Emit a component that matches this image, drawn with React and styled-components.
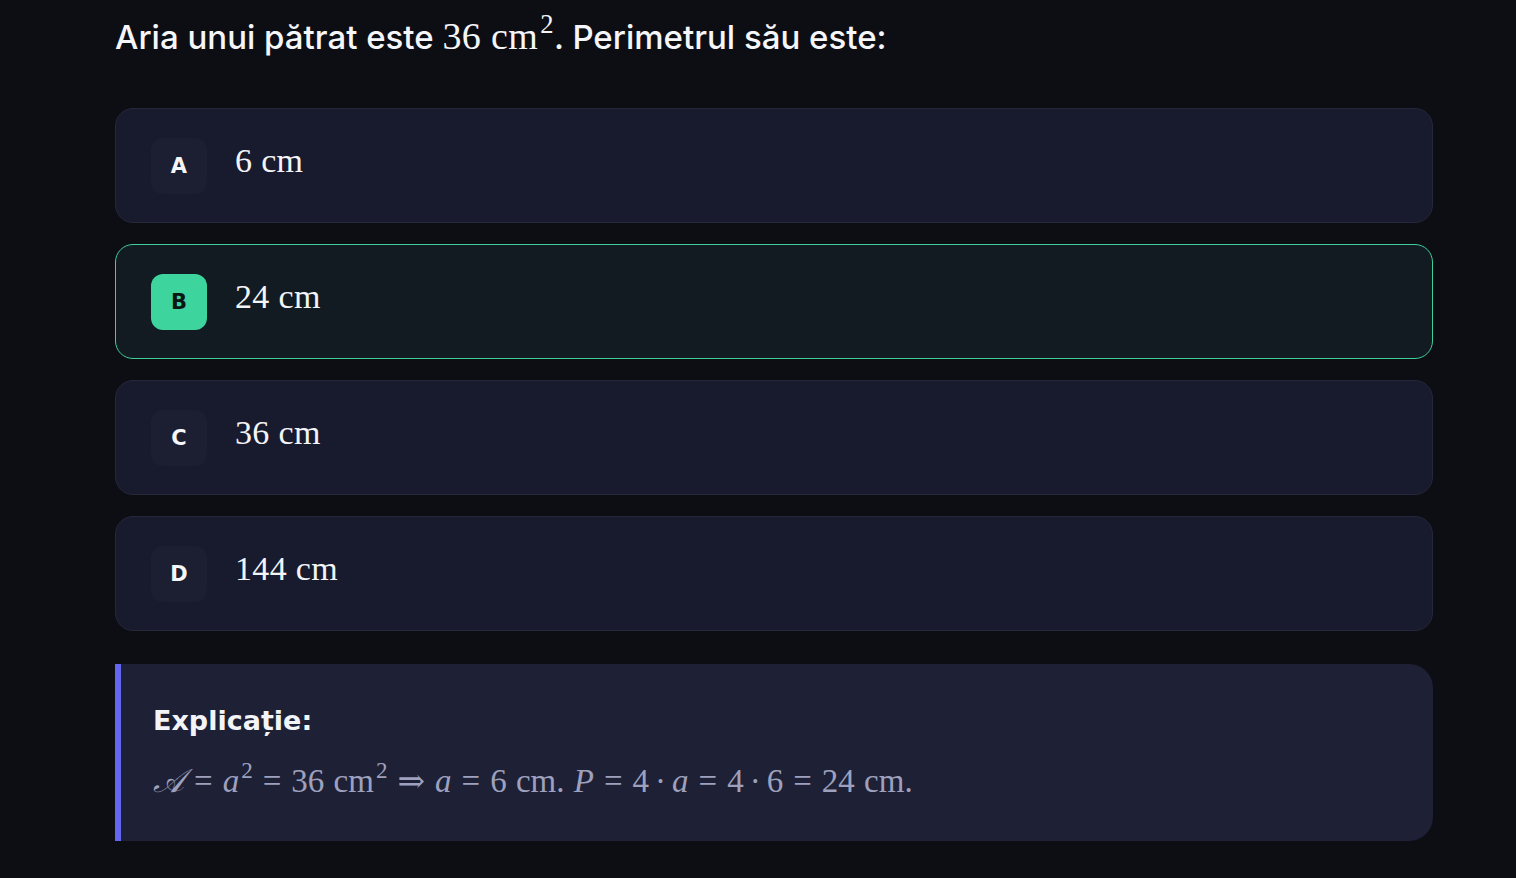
import React from "react";
import styled, { createGlobalStyle } from "styled-components";

const Global = createGlobalStyle`
  html, body {
    margin: 0;
    padding: 0;
    background: #0d0e14;
  }
  body {
    font-family: Inter, "Noto Sans", sans-serif;
    color: #f3f4f8;
  }
`;

const Page = styled.main`
  min-height: 878px;
  box-sizing: border-box;
  padding: 14px 83px 0 115px;
`;

const Question = styled.h1`
  margin: 0 0 48px 0;
  height: 46px;
  font-size: 33px;
  font-weight: 500;
  letter-spacing: 0;
  line-height: 46px;
  color: #f5f6fa;
`;

const Math = styled.span`
  font-family: "Liberation Serif", "DejaVu Serif", serif;
  font-size: ${(p) => p.size || "38px"};
  font-weight: 400;
  letter-spacing: 0.01em;
  line-height: 1;
`;

const Sup = styled.sup`
  font-size: 0.7em;
  line-height: 0;
  vertical-align: 0.62em;
  margin-left: 2px;
`;

const Options = styled.ul`
  list-style: none;
  margin: 0;
  padding: 0;
  display: flex;
  flex-direction: column;
  gap: 21px;
`;

const Option = styled.li`
  box-sizing: border-box;
  height: 115px;
  display: flex;
  align-items: center;
  gap: 28px;
  padding: 0 35px;
  border-radius: 18px;
  border: 1px solid ${(p) => (p.selected ? "#3ecf9a" : "#25273b")};
  background: ${(p) => (p.selected ? "#121b21" : "#181a2e")};
`;

const Badge = styled.span`
  width: 56px;
  height: 56px;
  flex: none;
  display: flex;
  align-items: center;
  justify-content: center;
  border-radius: 12px;
  font-family: "DejaVu Sans", sans-serif;
  font-weight: 700;
  font-size: 21px;
  background: ${(p) => (p.selected ? "#3dd49d" : "#1c1e31")};
  color: ${(p) => (p.selected ? "#0b1712" : "#f5f6fa")};
`;

const Answer = styled.span`
  font-family: "Liberation Serif", "DejaVu Serif", serif;
  font-size: 34px;
  letter-spacing: 0.01em;
  color: #f3f4f8;
  margin-top: -10px;
`;

const Explanation = styled.section`
  margin-top: 33px;
  box-sizing: border-box;
  height: 177px;
  padding: 41px 32px 0 32px;
  background: #1e2036;
  border-left: 6px solid #6366f1;
  border-radius: 0 24px 24px 0;
`;

const ExplTitle = styled.h2`
  margin: 0 0 25px 0;
  font-family: "DejaVu Sans", sans-serif;
  font-weight: 700;
  font-size: 27px;
  letter-spacing: 0;
  color: #f3f4f8;
`;

const Formula = styled.p`
  margin: 0;
  font-family: "Liberation Serif", "DejaVu Serif", serif;
  font-size: 33px;
  color: #9ea1bd;
  word-spacing: 1px;
`;

const I = styled.i`
  font-style: italic;
`;

const Op = styled.span`
  margin: 0 ${(p) => p.gap || "10px"};
`;

const options = [
  { key: "A", text: "6 cm" },
  { key: "B", text: "24 cm", selected: true },
  { key: "C", text: "36 cm" },
  { key: "D", text: "144 cm" },
];

export default function App() {
  return (
    <>
      <Global />
      <Page>
        <Question>
          Aria unui pătrat este <Math>36 cm<Sup>2</Sup></Math>. Perimetrul său este:
        </Question>
        <Options>
          {options.map((o) => (
            <Option key={o.key} selected={o.selected}>
              <Badge selected={o.selected}>{o.key}</Badge>
              <Answer>{o.text}</Answer>
            </Option>
          ))}
        </Options>
        <Explanation>
          <ExplTitle>Explicație:</ExplTitle>
          <Formula>
            <I>𝒜</I>
            <Op>=</Op>
            <I>a</I>
            <Sup>2</Sup>
            <Op>=</Op>36 cm<Sup>2</Sup>
            <Op>⇒</Op>
            <I>a</I>
            <Op>=</Op>6 cm. <I>P</I>
            <Op>=</Op>4<Op gap="6px">·</Op>
            <I>a</I>
            <Op>=</Op>4<Op gap="6px">·</Op>6<Op>=</Op>24 cm.
          </Formula>
        </Explanation>
      </Page>
    </>
  );
}
